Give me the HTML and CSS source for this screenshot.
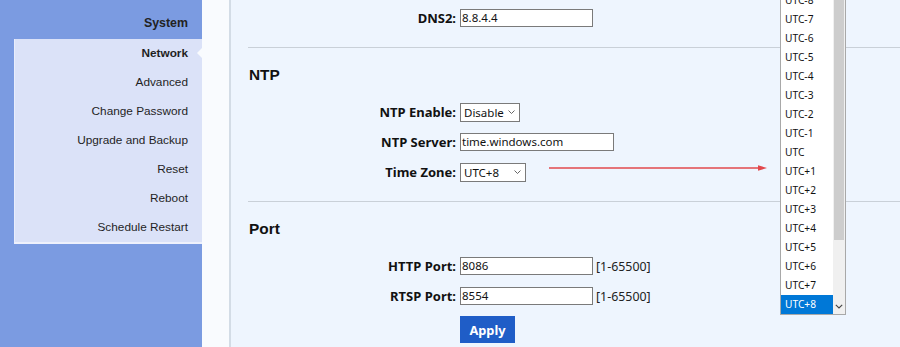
FILE: index.html
```html
<!DOCTYPE html>
<html>
<head>
<meta charset="utf-8">
<link rel="stylesheet" href="styles.css">
</head>
<body>
<div class="page">
  <aside class="sidebar">
    <div class="side-head">System</div>
    <ul class="menu">
      <li class="menu-item active">Network</li>
      <li class="menu-item">Advanced</li>
      <li class="menu-item">Change Password</li>
      <li class="menu-item">Upgrade and Backup</li>
      <li class="menu-item">Reset</li>
      <li class="menu-item">Reboot</li>
      <li class="menu-item">Schedule Restart</li>
    </ul>
  </aside>
  <div class="gutter"></div>
  <main class="content">
    <div class="row"><label class="lbl">DNS2:</label><div class="input w133">8.8.4.4</div></div>
    <div class="sep"></div>
    <h2 class="heading">NTP</h2>
    <div class="row"><label class="lbl">NTP Enable:</label><div class="select w60"><span>Disable</span><svg class="chev" width="7" height="4" viewBox="0 0 7 4"><path d="M0.5 0.5 L3.5 3.5 L6.5 0.5" fill="none" stroke="#555" stroke-width="0.9"/></svg></div></div>
    <div class="row"><label class="lbl">NTP Server:</label><div class="input w154">time.windows.com</div></div>
    <div class="row"><label class="lbl">Time Zone:</label><div class="select w66"><span>UTC+8</span><svg class="chev" width="7" height="4" viewBox="0 0 7 4"><path d="M0.5 0.5 L3.5 3.5 L6.5 0.5" fill="none" stroke="#555" stroke-width="0.9"/></svg></div></div>
    <div class="sep"></div>
    <h2 class="heading">Port</h2>
    <div class="row"><label class="lbl">HTTP Port:</label><div class="input w133">8086</div><span class="range">[1-65500]</span></div>
    <div class="row"><label class="lbl">RTSP Port:</label><div class="input w133">8554</div><span class="range">[1-65500]</span></div>
    <div class="row-btn"><button class="apply">Apply</button></div>
  </main>

  <svg class="arrow" width="222" height="10" viewBox="0 0 222 10">
    <line x1="0" y1="5" x2="212" y2="5" stroke="#e2484c" stroke-width="1.3"/>
    <polygon points="209,2.2 218,5 209,7.8" fill="#e2484c"/>
  </svg>

  <div class="tz-list">
    <ul class="tz-options">
      <li>UTC-8</li><li>UTC-7</li><li>UTC-6</li><li>UTC-5</li><li>UTC-4</li><li>UTC-3</li><li>UTC-2</li><li>UTC-1</li><li>UTC</li><li>UTC+1</li><li>UTC+2</li><li>UTC+3</li><li>UTC+4</li><li>UTC+5</li><li>UTC+6</li><li>UTC+7</li><li class="sel">UTC+8</li>
    </ul>
    <div class="scroll">
      <div class="thumb"></div>
      <svg class="scroll-down" width="8" height="5" viewBox="0 0 8 5"><path d="M0.8 0.8 L4 4 L7.2 0.8" fill="none" stroke="#444" stroke-width="1.1"/></svg>
    </div>
  </div>
</div>
</body>
</html>
```

FILE: styles.css
```css
* { box-sizing: border-box; }
html, body { margin: 0; padding: 0; }
body { width: 900px; height: 347px; overflow: hidden; background: #eef5fe; }

.page {
  position: relative;
  display: flex;
  width: 900px;
  height: 347px;
  overflow: hidden;
}

/* Sidebar */
.sidebar {
  width: 202px;
  flex: none;
  background: #7b9be1;
  font-family: "Liberation Sans", Arial, sans-serif;
  color: #1e1e1e;
}
.side-head {
  height: 39px;
  padding-top: 8px;
  line-height: 31px;
  padding-right: 14px;
  text-align: right;
  font-weight: bold;
  font-size: 12.4px;
  color: #222;
}
.menu {
  list-style: none;
  margin: 0 0 0 14px;
  padding: 0;
  background: #dbe2f8;
  border-left: 1px solid #e9edfb;
  border-bottom: 2px solid #eef1fc;
}
.menu-item {
  position: relative;
  height: 29px;
  line-height: 29px;
  padding-right: 14px;
  text-align: right;
  font-size: 11.8px;
  color: #1f1f1f;
}
.menu-item.active { font-weight: bold; }
.menu-item.active::after {
  content: "";
  position: absolute;
  right: 0;
  top: 9px;
  border-top: 5px solid transparent;
  border-bottom: 5px solid transparent;
  border-right: 5px solid #f9fbfe;
}

.gutter {
  width: 29px;
  flex: none;
  background: #f9fbfe;
  border-right: 2px solid #d3dce6;
}

/* Content */
.content {
  flex: 1;
  background: #eef5fe;
  padding: 3px 0 0 18px;
  font-family: "Noto Sans", "Open Sans", sans-serif;
  color: #111;
}
.row {
  display: flex;
  align-items: center;
  height: 30px;
}
.lbl {
  width: 207px;
  margin-right: 4px;
  text-align: right;
  font-weight: bold;
  font-size: 13px;
  color: #111;
}
.input {
  height: 18px;
  background: #fff;
  border: 1px solid #7a7a7a;
  padding-left: 1px;
  font-size: 11.5px;
  line-height: 16px;
  color: #111;
}
.w133 { width: 133px; }
.w154 { width: 154px; }
.w60 { width: 60px; }
.w66 { width: 66px; }
.select {
  height: 19px;
  display: flex;
  align-items: center;
  justify-content: space-between;
  background: #fff;
  border: 1px solid #7a7a7a;
  padding: 0 4px 0 3px;
  font-size: 11.5px;
  color: #111;
}
.select .chev { flex: none; }
.range {
  margin-left: 3px;
  font-size: 12.4px;
  color: #222;
}
.sep {
  height: 1px;
  background: #c9d0d8;
  margin-top: 14px;
  margin-left: -1px;
}
.heading {
  margin: 18px 0 14px 0;
  height: 17px;
  line-height: 17px;
  font-family: "Liberation Sans", Arial, sans-serif;
  font-weight: bold;
  font-size: 15.4px;
  color: #111;
}
.row-btn {
  padding-left: 211px;
  margin-top: 5px;
}
.apply {
  width: 55px;
  height: 27px;
  border: none;
  background: #1f5dc7;
  color: #fff;
  font-family: "Noto Sans", "Open Sans", sans-serif;
  font-weight: bold;
  font-size: 12.8px;
  padding: 0;
}

/* Annotation arrow */
.arrow {
  position: absolute;
  left: 549px;
  top: 163px;
}

/* Open dropdown list */
.tz-list {
  position: absolute;
  left: 780px;
  top: -10px;
  width: 66px;
  height: 325px;
  display: flex;
  background: #fff;
  border: 1px solid #a8a8a8;
  font-family: "Noto Sans", "Open Sans", sans-serif;
}
.tz-options {
  list-style: none;
  margin: 0;
  padding: 0;
  width: 52px;
}
.tz-options li {
  height: 19px;
  line-height: 19px;
  padding-left: 4px;
  font-size: 10.2px;
  color: #111;
}
.tz-options li.sel {
  background: #0078d7;
  color: #fff;
}
.scroll {
  position: relative;
  flex: 1;
  background: #f0f0f0;
}
.thumb {
  margin: 0 1px 0 1px;
  height: 249px;
  background: #cdcdcd;
}
.scroll-down {
  position: absolute;
  left: 2px;
  bottom: 5px;
}
```
